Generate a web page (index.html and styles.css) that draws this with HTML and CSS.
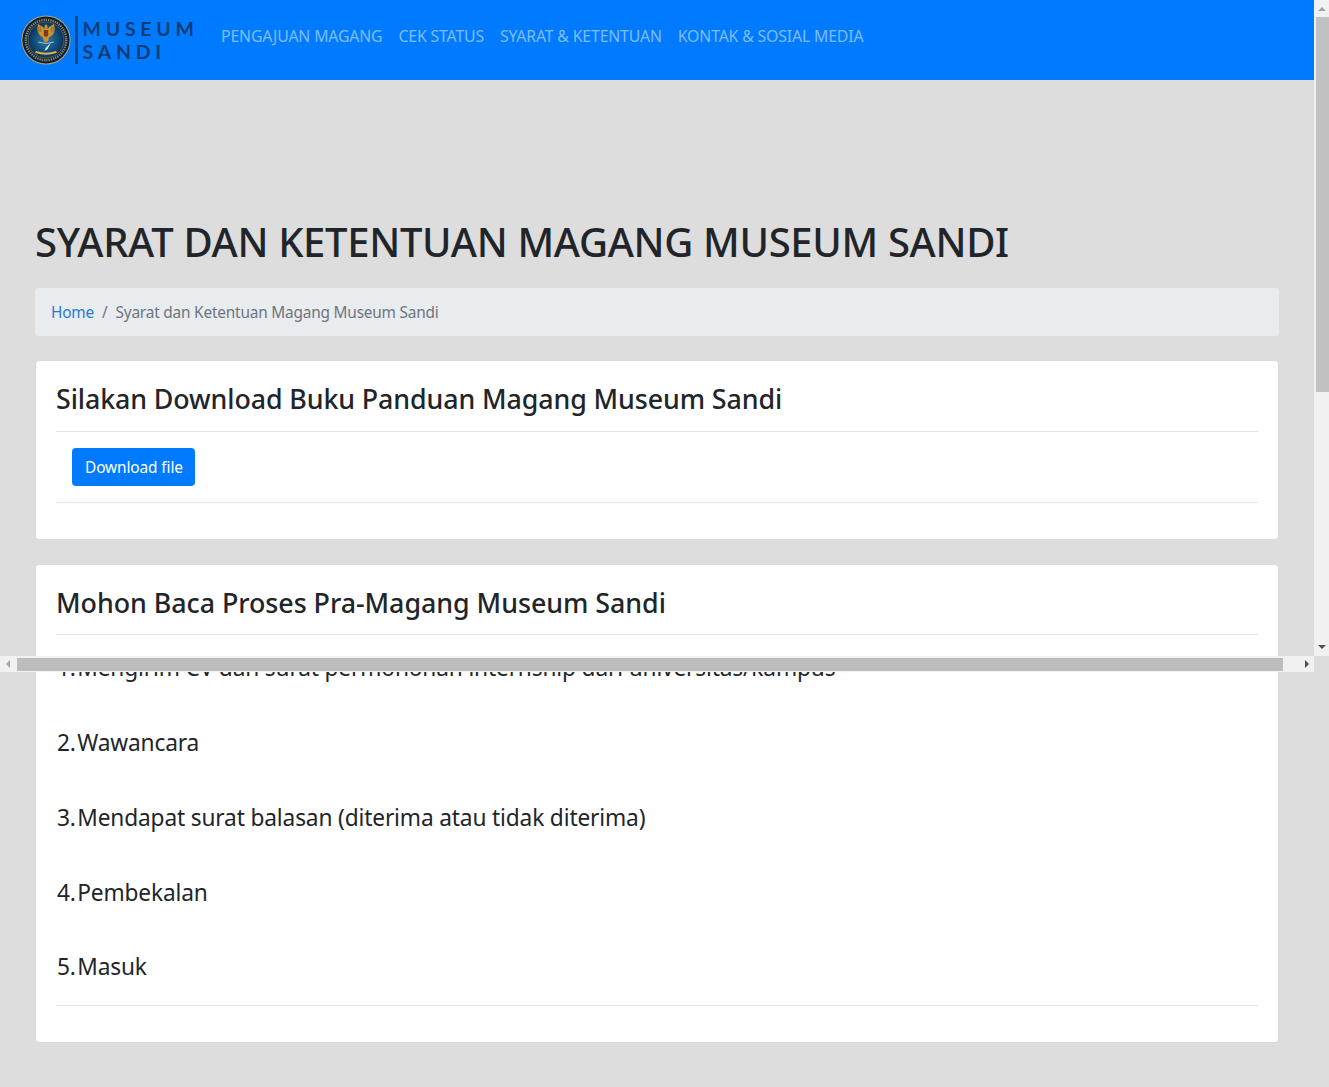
FILE: index.html
```html
<!DOCTYPE html>
<html lang="id">
<head>
<meta charset="utf-8">
<title>Syarat dan Ketentuan Magang Museum Sandi</title>
<link rel="stylesheet" href="styles.css">
</head>
<body>
<nav class="navbar">
  <a class="brand" href="#">
    <svg class="emblem" width="50" height="50" viewBox="0 0 50 50" aria-hidden="true">
      <defs>
        <radialGradient id="g" cx="50%" cy="50%" r="55%">
          <stop offset="0" stop-color="#2a7aa6"/>
          <stop offset="0.6" stop-color="#124c7c"/>
          <stop offset="1" stop-color="#0b2a4c"/>
        </radialGradient>
      </defs>
      <circle cx="25" cy="25" r="24.6" fill="#b5a368"/>
      <circle cx="25" cy="25" r="23.6" fill="#0d2036"/>
      <circle cx="25" cy="25" r="20.2" fill="none" stroke="#7d8479" stroke-width="2.400" stroke-dasharray="1.400 .9"/>
      <circle cx="25" cy="25" r="18" fill="url(#g)" stroke="#a3914f" stroke-width=".5"/>
      <path d="M25 9l1.400 2 .3 3 1.300-2 5-3 .7 4.500-.7 4.500-2.800 3.200-2.200 1.300-1 3.500-2 1.500-2-1.500-1-3.500-2.200-1.300-2.800-3.200-.7-4.500.7-4.500 5 3 1.300 2 .3-3z" fill="#c8942f"/>
      <path d="M22.800 15h4.400v5.500l-2.200 1.800-2.200-1.800z" fill="#7f3a20"/>
      <path d="M19 11.500l1 5.500M31 11.500l-1 5.500M17.500 12l.8 5.500M32.500 12l-.8 5.500" stroke="#7a5317" stroke-width=".6" fill="none"/>
      <path d="M17 27q8 3 16 0" stroke="#c9d3d6" stroke-width=".8" fill="none"/>
      <path d="M30 27.500l-3.500 6.500-3 2 1.200-3z" fill="#eef3f5"/>
      <path d="M15 36q10 3.500 20 0l1 1.800q-11 4-22 0z" fill="#d8b64a"/>
    </svg>
    <span class="brand-rule"></span>
    <span class="brand-text"><span>MUSEUM</span><span>SANDI</span></span>
  </a>
  <ul class="nav">
    <li><a href="#">PENGAJUAN MAGANG</a></li>
    <li><a href="#">CEK STATUS</a></li>
    <li><a href="#">SYARAT &amp; KETENTUAN</a></li>
    <li><a href="#">KONTAK &amp; SOSIAL MEDIA</a></li>
  </ul>
</nav>

<main class="content">
  <h1 class="title">SYARAT DAN KETENTUAN MAGANG MUSEUM SANDI</h1>
  <ol class="breadcrumb">
    <li><a href="#">Home</a></li>
    <li class="sep">/</li>
    <li class="current">Syarat dan Ketentuan Magang Museum Sandi</li>
  </ol>

  <section class="card card-download">
    <h2 class="card-title">Silakan Download Buku Panduan Magang Museum Sandi</h2>
    <hr class="rule rule-wide">
    <div class="download-row"><a class="btn" href="#">Download file</a></div>
    <hr class="rule">
  </section>

  <section class="card card-process">
    <h2 class="card-title">Mohon Baca Proses Pra-Magang Museum Sandi</h2>
    <hr class="rule">
    <div class="steps">
      <p><span class="num">1.</span>Mengirim CV dan surat permohonan internship dari universitas/kampus</p>
      <p><span class="num">2.</span>Wawancara</p>
      <p><span class="num">3.</span>Mendapat surat balasan (diterima atau tidak diterima)</p>
      <p><span class="num">4.</span>Pembekalan</p>
      <p><span class="num">5.</span>Masuk</p>
    </div>
    <hr class="rule">
  </section>
</main>

<div class="scroll-v" aria-hidden="true">
  <span class="arrow arrow-up"></span>
  <span class="thumb-v"></span>
  <span class="arrow arrow-down"></span>
</div>
<div class="scroll-h" aria-hidden="true">
  <span class="arrow arrow-left"></span>
  <span class="thumb-h"></span>
  <span class="arrow arrow-right"></span>
</div>
</body>
</html>
```
FILE: styles.css
```css
* { box-sizing: border-box; }
html, body { margin: 0; padding: 0; }
body {
  position: relative;
  height: 1087px;
  overflow: hidden;
  background: #dddddd;
  color: #212529;
  font-family: "Noto Sans", "Open Sans", "Liberation Sans", sans-serif;
  font-size: 16px;
  line-height: 1.5;
}
a { text-decoration: none; }

.navbar {
  display: flex;
  align-items: center;
  height: 80px;
  padding: 0 16px 0 21px;
  background: #007bff;
}
.brand { display: flex; align-items: center; width: 192px; }
.emblem { display: block; flex: none; }
.brand-rule {
  flex: none;
  width: 2.600px;
  height: 48px;
  margin-left: 4px;
  background: #0a4c92;
}
.brand-text {
  display: flex;
  flex-direction: column;
  margin-left: 5px;
  color: #0c3d76;
  font-family: "Lato", "Liberation Sans", sans-serif;
  font-size: 19.500px;
  font-weight: 700;
  letter-spacing: 4.700px;
  line-height: 23px;
}
.nav {
  display: flex;
  margin: 0 0 8px;
  padding: 0;
  list-style: none;
}
.nav a {
  display: block;
  padding: 0 8px;
  color: rgba(255, 255, 255, .5);
  font-size: 15.800px;
  letter-spacing: -.15px;
  line-height: 24px;
}

.content { width: 1314px; padding: 0 35px; }
.title {
  margin: 0;
  padding-top: 135px;
  color: #212529;
  font-size: 40px;
  font-weight: 500;
  letter-spacing: -.33px;
  line-height: 53px;
  white-space: nowrap;
}
.breadcrumb {
  display: flex;
  align-items: center;
  height: 48px;
  margin: 20px 0 24px;
  padding: 2px 16px 0;
  border-radius: 4px;
  background: #e9ecef;
  font-size: 15.400px;
  letter-spacing: -.2px;
  list-style: none;
}
.breadcrumb a { color: #2a78d6; }
.sep { margin: 0 8px; color: #6c757d; }
.current { color: #6c757d; }

.card {
  padding: 20px;
  border: 1px solid #d8d8d8;
  border-radius: 4px;
  background: #fff;
}
.card-download { height: 180px; margin-bottom: 24px; }
.card-process { height: 479px; }
.card-title {
  margin: 0;
  color: #212529;
  font-size: 26.800px;
  font-weight: 500;
  letter-spacing: -.1px;
  line-height: 36px;
}
.card-process .card-title { letter-spacing: -.03px; }
.rule {
  height: 1px;
  margin: 13px 0 0;
  border: 0;
  background: #e4e4e4;
}
.rule-wide { margin-top: 14px; }
.download-row { padding: 16px; }
.btn {
  display: block;
  width: 123px;
  height: 38px;
  padding: 7px 0 0 13px;
  border-radius: 4px;
  background: #007bff;
  color: #fff;
  font-size: 15.400px;
  letter-spacing: -.1px;
  line-height: 26px;
}
.download-row + .rule { margin-top: 0; }

.steps { padding: 15.300px 0 0 1px; }
.steps p {
  margin: 0 0 38.800px;
  color: #212529;
  font-size: 22.700px;
  letter-spacing: -.15px;
  line-height: 36px;
}
.steps p:last-child { margin-bottom: 0; }
.steps + .rule { margin-top: 19.700px; }
.num { margin-right: 1.500px; }

.scroll-v {
  position: absolute;
  top: 0;
  right: 0;
  display: flex;
  flex-direction: column;
  align-items: center;
  width: 15px;
  height: 656px;
  background: #f1f1f1;
}
.thumb-v {
  flex: none;
  width: 13px;
  height: 375px;
  margin-left: 2px;
  background: #c1c1c1;
}
.scroll-h {
  position: absolute;
  top: 656px;
  left: 0;
  display: flex;
  align-items: center;
  width: 1314px;
  height: 16px;
  background: #f1f1f1;
}
.thumb-h {
  flex: none;
  width: 1266px;
  height: 13px;
  background: #bdbdbd;
}
.arrow { flex: none; width: 0; height: 0; border-style: solid; border-color: transparent; }
.arrow-up {
  margin: 7px 0 6px;
  border-width: 0 4px 4px;
  border-bottom-color: #a3a3a3;
}
.arrow-down {
  margin-top: auto;
  margin-bottom: 7px;
  border-width: 4px 4px 0;
  border-top-color: #505050;
}
.arrow-left {
  margin: 0 7px 0 6px;
  border-width: 4px 4px 4px 0;
  border-right-color: #a3a3a3;
}
.arrow-right {
  margin-left: auto;
  margin-right: 5px;
  border-width: 4px 0 4px 4px;
  border-left-color: #505050;
}
```
